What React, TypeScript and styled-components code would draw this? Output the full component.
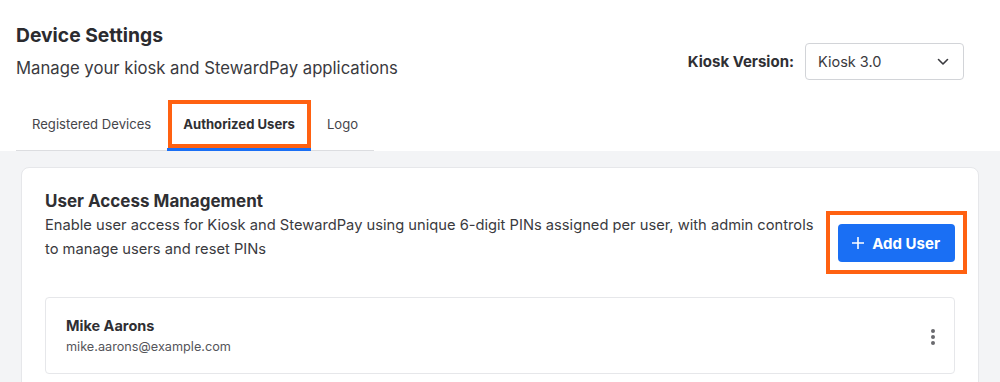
import React from "react";
import styled, {createGlobalStyle} from "styled-components";

const GlobalStyle = createGlobalStyle`
  html, body {
    margin: 0;
    padding: 0;
    background: #ffffff;
    font-family: Inter, "Noto Sans", "Liberation Sans", sans-serif;
    color: #2f2f33;
  }
`

const Page = styled.div`
  width: 1000px;
  min-height: 382px;
  display: flex;
  flex-direction: column;
  background: #f3f4f6;
`

const Header = styled.header`
  background: #ffffff;
  padding: 23px 16px 0 16px;
  display: flex;
  flex-direction: column;
`

const HeaderTop = styled.div`
  display: flex;
  justify-content: space-between;
  align-items: flex-start;
`

const TitleBlock = styled.div`
  display: flex;
  flex-direction: column;
  gap: 9px;
`

const Title = styled.h1`
  margin: 0;
  font-size: 19.3px;
  line-height: 24px;
  font-weight: 700;
  color: #2b2b2f;
`

const Subtitle = styled.p`
  margin: 0;
  font-size: 16.7px;
  line-height: 24px;
  color: #3a3a3e;
`

const VersionPicker = styled.div`
  display: flex;
  align-items: center;
  gap: 11px;
  margin-top: 20px;
  margin-right: 20px;
`

const PickerLabel = styled.span`
  font-size: 15px;
  font-weight: 700;
  color: #2f2f33;
`

const Select = styled.div`
  width: 159px;
  height: 37px;
  box-sizing: border-box;
  border: 1px solid #d2d4d8;
  border-radius: 4px;
  display: flex;
  align-items: center;
  justify-content: space-between;
  padding: 0 14px 0 12px;
  font-size: 14.5px;
  color: #3a3a3e;
`

const Tabs = styled.nav`
  display: flex;
  align-self: flex-start;
  margin-top: 19px;
  border-bottom: 1px solid #dcdde0;
`

const Tab = styled.div<{ active?: boolean }>`
  position: relative;
  padding: 0 16px;
  height: 49px;
  display: flex;
  align-items: center;
  font-size: 13.1px;
  font-weight: ${props => props.active ? 700 : 400};
  color: ${props => props.active ? '#2f2f33' : '#45454a'};
  border-bottom: 3px solid ${props => props.active ? '#1a6ff4' : 'transparent'};
  margin-bottom: -1px;
`

const Highlight = styled.span<{ inset: string }>`
  position: absolute;
  inset: ${props => props.inset};
  border: 4px solid #ff6111;
  pointer-events: none;
`

const Body = styled.main`
  padding: 16px 21px 0 21px;
`

const Card = styled.section`
  background: #ffffff;
  border: 1px solid #e6e7ea;
  border-radius: 8px;
  padding: 21px 23px 24px 23px;
`

const CardHead = styled.div`
  display: flex;
  align-items: flex-end;
  gap: 16px;
`

const CardText = styled.div`
  flex: 1;
  display: flex;
  flex-direction: column;
`

const CardTitle = styled.h2`
  margin: 0;
  font-size: 17px;
  line-height: 24px;
  font-weight: 700;
  color: #2f2f33;
`

const CardDesc = styled.p`
  margin: 0;
  font-size: 14.7px;
  line-height: 24px;
  color: #3a3a3e;
`

const ButtonWrap = styled.div`
  position: relative;
  margin-bottom: -1px;
`

const AddButton = styled.button`
  height: 38px;
  padding: 0 15px 0 14px;
  border: none;
  border-radius: 4px;
  background: #1a6ff4;
  color: #ffffff;
  font-family: inherit;
  font-size: 15px;
  font-weight: 700;
  display: flex;
  align-items: center;
  gap: 8px;
`

const UserRow = styled.div`
  margin-top: 36px;
  border: 1px solid #e6e7ea;
  border-radius: 4px;
  padding: 18px 18px 16px 20px;
  display: flex;
  align-items: center;
  justify-content: space-between;
`

const UserInfo = styled.div`
  display: flex;
  flex-direction: column;
  gap: 1px;
`

const UserName = styled.div`
  font-size: 14.5px;
  line-height: 20px;
  font-weight: 700;
  color: #2f2f33;
`

const UserEmail = styled.div`
  font-size: 12.7px;
  line-height: 20px;
  color: #55555a;
`

const Kebab = () => (
    <svg width="6" height="18" viewBox="0 0 6 18">
        <circle cx="3" cy="3" r="2" fill="#6a6a6e"/>
        <circle cx="3" cy="9" r="2" fill="#6a6a6e"/>
        <circle cx="3" cy="15" r="2" fill="#6a6a6e"/>
    </svg>
)

const Chevron = () => (
    <svg width="12" height="8" viewBox="0 0 12 8">
        <path d="M1.5 1.5 L6 6 L10.5 1.5" fill="none" stroke="#3a3a3e" strokeWidth="1.6"
              strokeLinecap="round" strokeLinejoin="round"/>
    </svg>
)

const Plus = () => (
    <svg width="12" height="12" viewBox="0 0 12 12">
        <path d="M6 0.5 V11.5 M0.5 6 H11.5" stroke="#ffffff" strokeWidth="1.6" strokeLinecap="round"/>
    </svg>
)

const tabs = ['Registered Devices', 'Authorized Users', 'Logo']

export default function App() {
    return (
        <>
            <GlobalStyle/>
            <Page>
                <Header>
                    <HeaderTop>
                        <TitleBlock>
                            <Title>Device Settings</Title>
                            <Subtitle>Manage your kiosk and StewardPay applications</Subtitle>
                        </TitleBlock>
                        <VersionPicker>
                            <PickerLabel>Kiosk Version:</PickerLabel>
                            <Select>
                                <span>Kiosk 3.0</span>
                                <Chevron/>
                            </Select>
                        </VersionPicker>
                    </HeaderTop>
                    <Tabs>
                        {tabs.map(t => (
                            <Tab key={t} active={t === 'Authorized Users'}>
                                {t}
                                {t === 'Authorized Users' && <Highlight inset="1px 0 0 1px"/>}
                            </Tab>
                        ))}
                    </Tabs>
                </Header>
                <Body>
                    <Card>
                        <CardHead>
                            <CardText>
                                <CardTitle>User Access Management</CardTitle>
                                <CardDesc>
                                    Enable user access for Kiosk and StewardPay using unique 6-digit PINs assigned per
                                    user, with admin controls to manage users and reset PINs
                                </CardDesc>
                            </CardText>
                            <ButtonWrap>
                                <AddButton><Plus/>Add User</AddButton>
                                <Highlight inset="-13px -12px -12px -12px"/>
                            </ButtonWrap>
                        </CardHead>
                        <UserRow>
                            <UserInfo>
                                <UserName>Mike Aarons</UserName>
                                <UserEmail>mike.aarons@example.com</UserEmail>
                            </UserInfo>
                            <Kebab/>
                        </UserRow>
                    </Card>
                </Body>
            </Page>
        </>
    )
}
